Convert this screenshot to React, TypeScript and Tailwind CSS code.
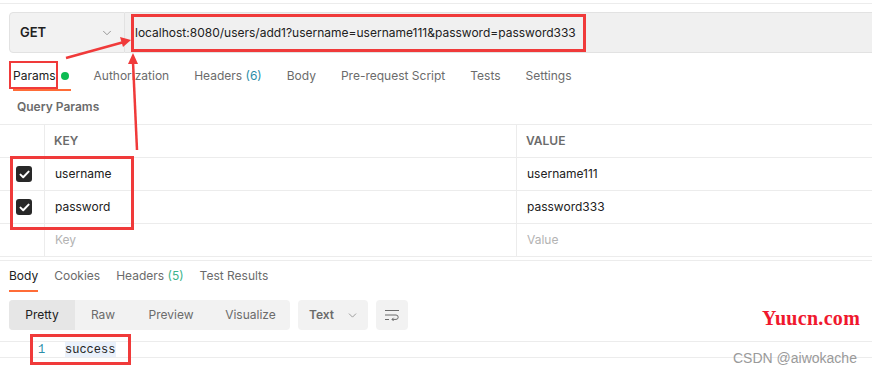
import { ChevronDown } from 'lucide-react';

function Check() {
  return (
    <div className="grid h-[16px] w-[16px] place-items-center rounded-[3px] bg-[#282828]">
      <svg width="11" height="9" viewBox="0 0 11 9" fill="none">
        <path d="M1.5 4.6 4.2 7.2 9.6 1.6" stroke="white" strokeWidth="2" strokeLinecap="round" strokeLinejoin="round" />
      </svg>
    </div>
  );
}

function Row({ k, v, checked, placeholder }: { k: string; v: string; checked?: boolean; placeholder?: boolean }) {
  return (
    <div className="flex h-[33px] border-b border-[#ececec]">
      <div className="flex w-[45px] items-center justify-center border-r border-[#ececec] pl-[4px]">
        {checked && <Check />}
      </div>
      <div className={`flex w-[472px] items-center border-r border-[#ececec] pl-[10px] ${placeholder ? 'text-[#b3b3b3]' : 'text-[#212121]'}`}>
        {k}
      </div>
      <div className={`flex flex-1 items-center pl-[10px] ${placeholder ? 'text-[#b3b3b3]' : 'text-[#212121]'}`}>{v}</div>
    </div>
  );
}

export default function App() {
  return (
    <div className="relative h-[373px] w-[872px] overflow-hidden bg-white font-['Inter',sans-serif] text-[12px]">
      <div className="mt-[3px] border-t border-[#ececec] pt-[8px]">
        <div className="flex h-[41px] pl-[9px]">
          <div className="flex w-[116px] items-center justify-between rounded-l-[4px] border border-[#e2e2e2] bg-[#f2f2f2] pl-[10px] pr-[10px]">
            <span className="text-[13px] font-semibold text-[#212121]">GET</span>
            <ChevronDown className="h-[14px] w-[14px] text-[#8a8a8a]" strokeWidth={1.5} />
          </div>
          <div className="flex flex-1 items-center border-y border-[#e2e2e2] bg-[#f0f0f0] pl-[10px] text-[12px] text-[#212121]">
            localhost:8080/users/add1?username=username111&amp;password=password333
          </div>
        </div>

        <div className="mt-[9px] flex h-[28px] items-center gap-[25px] pl-[13px] text-[#6b6b6b]">
          <div className="relative flex h-full items-center gap-[5px] text-[#212121]">
            Params
            <span className="h-[8px] w-[8px] rounded-full bg-[#0cbb52]" />
            <span className="absolute bottom-[-1px] left-0 right-[-2px] h-[2px] bg-[#ff6c37]" />
          </div>
          <span>Authorization</span>
          <span>
            Headers <span className="text-[#2b8ea8]">(6)</span>
          </span>
          <span>Body</span>
          <span>Pre-request Script</span>
          <span>Tests</span>
          <span>Settings</span>
        </div>

        <div className="flex h-[34px] items-center pl-[17px] text-[12px] font-semibold text-[#6b6b6b]">Query Params</div>

        <div className="border-t border-[#ececec]">
          <div className="flex h-[33px] border-b border-[#ececec] text-[12px] font-semibold text-[#6b6b6b]">
            <div className="w-[45px] border-r border-[#ececec]" />
            <div className="flex w-[472px] items-center border-r border-[#ececec] pl-[9px]">KEY</div>
            <div className="flex flex-1 items-center pl-[9px]">VALUE</div>
          </div>
          <Row k="username" v="username111" checked />
          <Row k="password" v="password333" checked />
          <Row k="Key" v="Value" placeholder />
        </div>

        <div className="mt-[3px] border-t border-[#ececec]">
          <div className="flex h-[30px] items-center gap-[16px] pl-[9px] text-[#6b6b6b]">
            <div className="relative flex h-full items-center text-[#212121]">
              Body
              <span className="absolute bottom-[-1px] left-0 right-0 h-[2px] bg-[#ff6c37]" />
            </div>
            <span>Cookies</span>
            <span>
              Headers <span className="text-[#3cb48c]">(5)</span>
            </span>
            <span>Test Results</span>
          </div>

          <div className="mt-[9px] flex h-[30px] gap-[8px] pl-[9px]">
            <div className="flex w-[281px] overflow-hidden rounded-[4px] bg-[#f2f2f2] text-[#6b6b6b]">
              <div className="flex w-[66px] items-center justify-center bg-[#e6e6e6] text-[#212121]">Pretty</div>
              <div className="flex w-[56px] items-center justify-center">Raw</div>
              <div className="flex w-[80px] items-center justify-center">Preview</div>
              <div className="flex flex-1 items-center justify-center">Visualize</div>
            </div>
            <div className="flex w-[70px] items-center gap-[12px] rounded-[4px] bg-[#f2f2f2] pl-[11px] text-[12px] font-semibold text-[#6b6b6b]">
              Text
              <ChevronDown className="h-[13px] w-[13px] text-[#8a8a8a]" strokeWidth={1.5} />
            </div>
            <div className="grid w-[32px] place-items-center rounded-[4px] bg-[#f2f2f2]">
              <svg width="16" height="14" viewBox="0 0 16 14" fill="none" stroke="#6b6b6b" strokeWidth="1">
                <path d="M1 2.5h14" />
                <path d="M1 7h11a2.2 2.2 0 0 1 0 4.4H8" />
                <path d="M9.6 9.8 8 11.4l1.6 1.6" />
                <path d="M1 11.5h4" />
              </svg>
            </div>
          </div>

          <div className="mt-[11px] flex h-[17px] items-center border-y border-[#ececec] font-['Liberation_Mono',monospace] text-[12px]">
            <span className="w-[65px] pl-[38px] text-[#2b8ea8]">1</span>
            <span className="flex h-full items-center bg-[#eaf1fb] pr-[1px] text-[#212121]">success</span>
          </div>
        </div>
      </div>

      <span className="absolute left-[762px] top-[303px] font-['Liberation_Serif',serif] text-[20px] font-semibold tracking-[0.3px] text-[#f0182e]">
        Yuucn.com
      </span>
      <span className="absolute left-[733px] top-[348px] font-['Liberation_Sans',sans-serif] text-[14px] text-[#9a9a9a]">
        CSDN @aiwokache
      </span>

      <div className="pointer-events-none absolute left-[131px] top-[14px] h-[38px] w-[455px] border-[3px] border-[#f03a3a]" />
      <div className="pointer-events-none absolute left-[9px] top-[61px] h-[28px] w-[49px] border-[2px] border-[#f03a3a]" />
      <div className="pointer-events-none absolute left-[10px] top-[156px] h-[74px] w-[124px] border-[3px] border-[#f03a3a]" />
      <div className="pointer-events-none absolute left-[30px] top-[334px] h-[31px] w-[101px] border-[3px] border-[#f03a3a]" />

      <svg className="pointer-events-none absolute left-0 top-0" width="872" height="373">
        <line x1="66" y1="58" x2="124" y2="42" stroke="#f03a3a" strokeWidth="2.5" />
        <polygon points="131,40 120,37 123,47" fill="#f03a3a" />
        <line x1="137" y1="150" x2="133" y2="62" stroke="#f03a3a" strokeWidth="2.5" />
        <polygon points="133,53 128,64 138,64" fill="#f03a3a" />
      </svg>
    </div>
  );
}
